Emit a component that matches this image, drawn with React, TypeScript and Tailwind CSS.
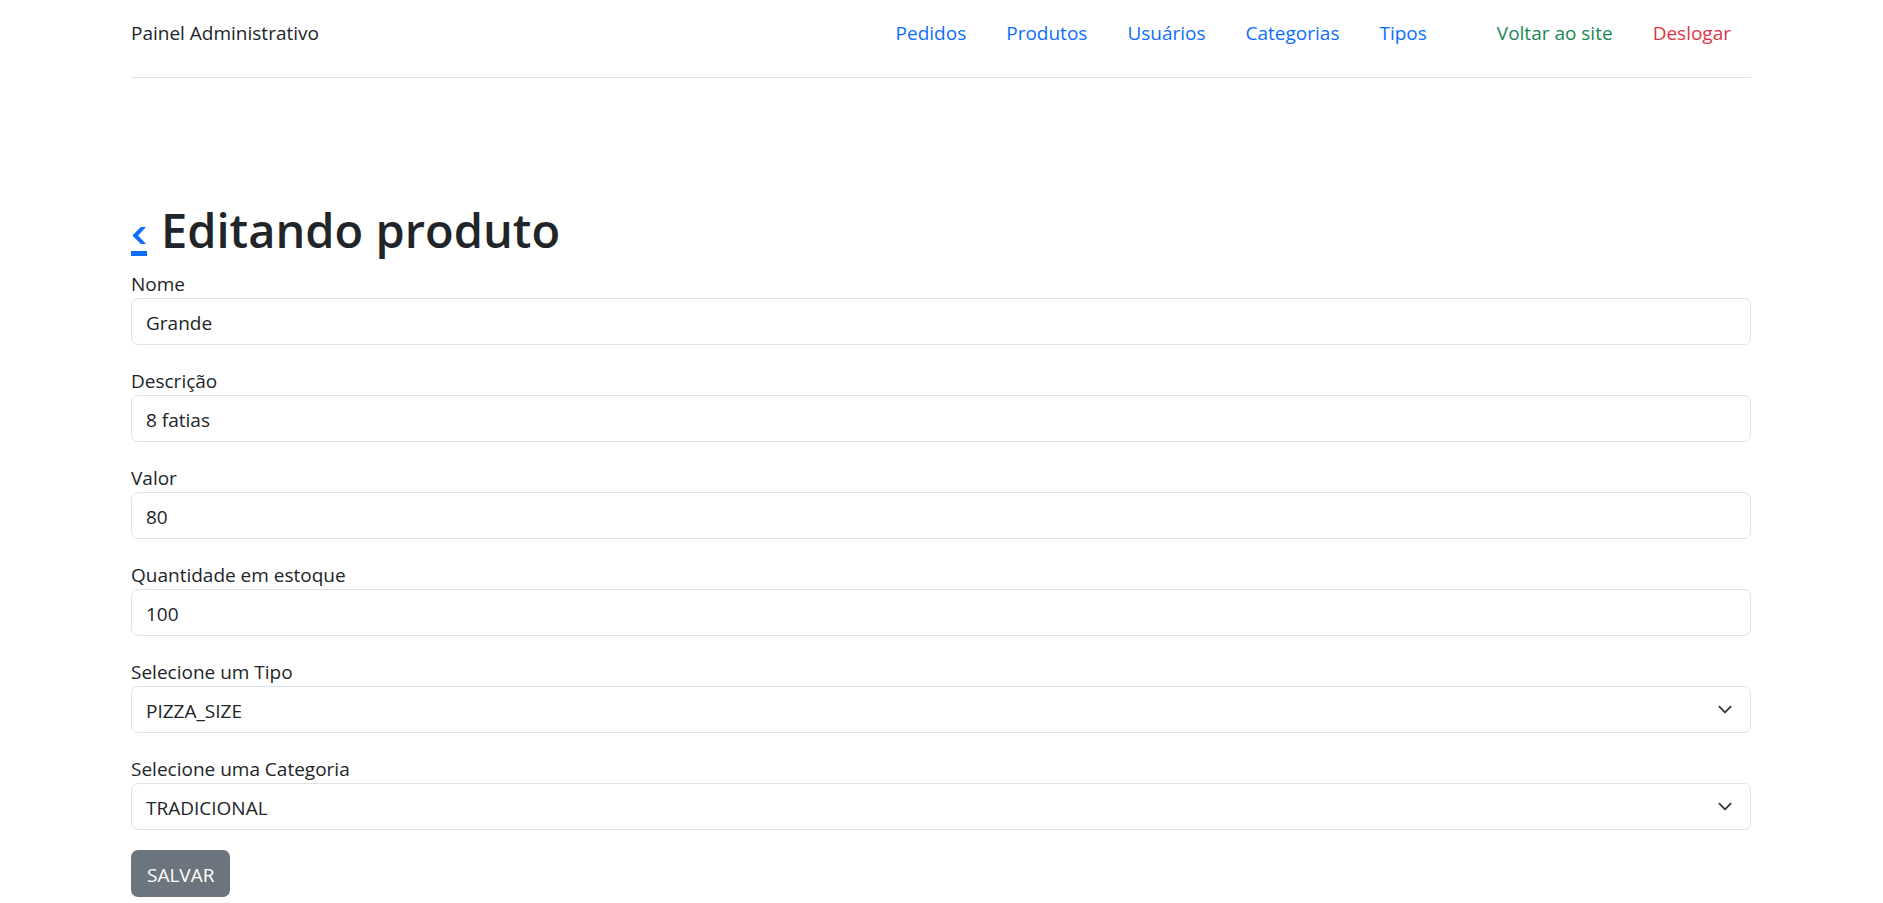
import type { ReactNode } from "react";

const navLinks = ["Pedidos", "Produtos", "Usuários", "Categorias", "Tipos"];

const fields = [
  { id: "nome", label: "Nome", value: "Grande" },
  { id: "descricao", label: "Descrição", value: "8 fatias" },
  { id: "valor", label: "Valor", value: "80" },
  { id: "quantidade", label: "Quantidade em estoque", value: "100" },
];

const selects = [
  { id: "tipo", label: "Selecione um Tipo", value: "PIZZA_SIZE" },
  { id: "categoria", label: "Selecione uma Categoria", value: "TRADICIONAL" },
];

const control =
  "block h-[47px] w-full appearance-none rounded-[7px] border border-[#dee2e6] bg-white px-[14px] pt-0.5 text-[19px] leading-[30px] text-[#212529]";

function Field({ id, label, children }: { id: string; label: string; children: ReactNode }) {
  return (
    <div>
      <label htmlFor={id} className="block pt-0.5 leading-[28px]">{label}</label>
      {children}
    </div>
  );
}

export default function App() {
  return (
    <div className="pr-[132px] pl-[131px] font-['Open_Sans','Noto_Sans',sans-serif] text-[19px] leading-[30px] text-[#212529]">
      <header className="flex items-start justify-between border-b border-[#dee2e6] pt-[18px] pb-[29px]">
        <span>Painel Administrativo</span>
        <nav className="flex gap-10 pr-5">
          {navLinks.map((name) => (
            <a key={name} href="#" className="text-[#0d6efd]">{name}</a>
          ))}
          <a href="#" className="ml-[30px] text-[#198754]">Voltar ao site</a>
          <a href="#" className="text-[#dc3545]">Deslogar</a>
        </nav>
      </header>
      <main className="pt-[122px]">
        <h1 className="mb-2 flex items-end gap-3.5 text-[47px] leading-[60px] font-semibold">
          <a href="#" aria-label="Voltar" className="mb-1 block border-b-[5px] border-[#0d6efd] pb-[7px] text-[#0d6efd]">
            <svg viewBox="0 0 16 17" className="h-[17px] w-4" fill="currentColor" aria-hidden="true">
              <path d="M9.9 0H15L7.1 8.5 15 17H9.9L1.8 9v-1Z" />
            </svg>
          </a>
          <span>Editando produto</span>
        </h1>
        <form className="flex flex-col gap-5">
          {fields.map((f) => (
            <Field key={f.id} id={f.id} label={f.label}>
              <input id={f.id} type="text" defaultValue={f.value} className={control} />
            </Field>
          ))}
          {selects.map((s) => (
            <Field key={s.id} id={s.id} label={s.label}>
              <div className="relative">
                <select id={s.id} className={control}><option>{s.value}</option></select>
                <svg
                  viewBox="0 0 16 16"
                  className="pointer-events-none absolute top-4 right-4 h-[15px] w-5"
                  fill="none"
                  stroke="#343a40"
                  strokeWidth="2"
                  strokeLinecap="round"
                  strokeLinejoin="round"
                  aria-hidden="true"
                >
                  <path d="m2 5 6 6 6-6" />
                </svg>
              </div>
            </Field>
          ))}
          <button type="button" className="h-[47px] self-start rounded-[7px] bg-[#6c757d] px-4 pt-0.5 text-white">SALVAR</button>
        </form>
      </main>
    </div>
  );
}
